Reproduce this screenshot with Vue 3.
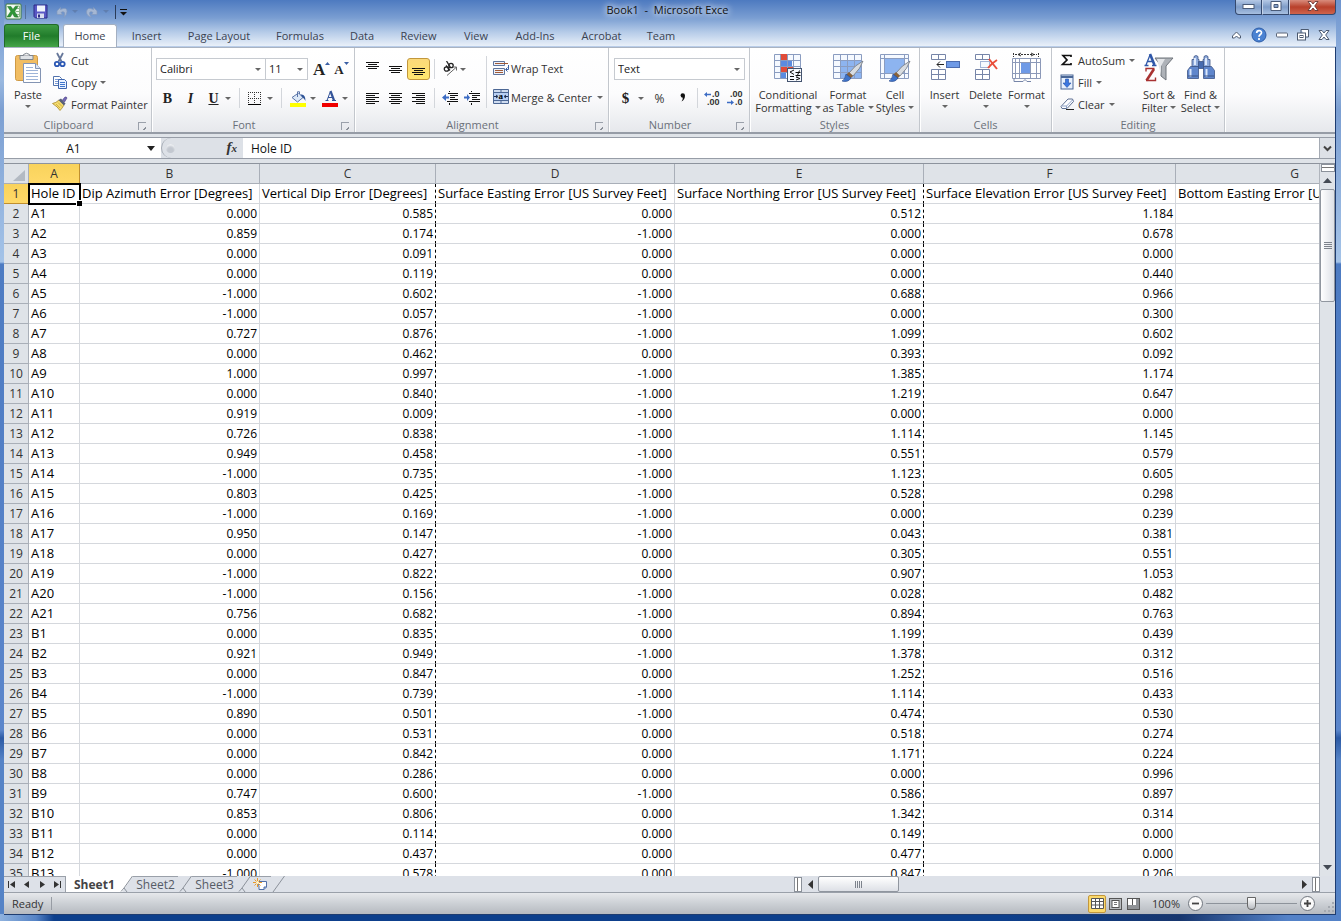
<script setup>
import { ref } from 'vue'

const tabs = [
  { name: 'Insert', w: 57 },
  { name: 'Page Layout', w: 88 },
  { name: 'Formulas', w: 74 },
  { name: 'Data', w: 50 },
  { name: 'Review', w: 63 },
  { name: 'View', w: 52 },
  { name: 'Add-Ins', w: 66 },
  { name: 'Acrobat', w: 67 },
  { name: 'Team', w: 52 }
]
const columns = ['A', 'B', 'C', 'D', 'E', 'F', 'G']
const headings = [
  'Hole ID',
  'Dip Azimuth Error [Degrees]',
  'Vertical Dip Error [Degrees]',
  'Surface Easting Error [US Survey Feet]',
  'Surface Northing Error [US Survey Feet]',
  'Surface Elevation Error [US Survey Feet]',
  'Bottom Easting Error [US Survey Feet]'
]
const rows = [
  ['A1', 0, 0.585, 0, 0.512, 1.184],
  ['A2', 0.859, 0.174, -1, 0, 0.678],
  ['A3', 0, 0.091, 0, 0, 0],
  ['A4', 0, 0.119, 0, 0, 0.44],
  ['A5', -1, 0.602, -1, 0.688, 0.966],
  ['A6', -1, 0.057, -1, 0, 0.3],
  ['A7', 0.727, 0.876, -1, 1.099, 0.602],
  ['A8', 0, 0.462, 0, 0.393, 0.092],
  ['A9', 1, 0.997, -1, 1.385, 1.174],
  ['A10', 0, 0.84, -1, 1.219, 0.647],
  ['A11', 0.919, 0.009, -1, 0, 0],
  ['A12', 0.726, 0.838, -1, 1.114, 1.145],
  ['A13', 0.949, 0.458, -1, 0.551, 0.579],
  ['A14', -1, 0.735, -1, 1.123, 0.605],
  ['A15', 0.803, 0.425, -1, 0.528, 0.298],
  ['A16', -1, 0.169, -1, 0, 0.239],
  ['A17', 0.95, 0.147, -1, 0.043, 0.381],
  ['A18', 0, 0.427, 0, 0.305, 0.551],
  ['A19', -1, 0.822, 0, 0.907, 1.053],
  ['A20', -1, 0.156, -1, 0.028, 0.482],
  ['A21', 0.756, 0.682, -1, 0.894, 0.763],
  ['B1', 0, 0.835, 0, 1.199, 0.439],
  ['B2', 0.921, 0.949, -1, 1.378, 0.312],
  ['B3', 0, 0.847, 0, 1.252, 0.516],
  ['B4', -1, 0.739, -1, 1.114, 0.433],
  ['B5', 0.89, 0.501, -1, 0.474, 0.53],
  ['B6', 0, 0.531, 0, 0.518, 0.274],
  ['B7', 0, 0.842, 0, 1.171, 0.224],
  ['B8', 0, 0.286, 0, 0, 0.996],
  ['B9', 0.747, 0.6, -1, 0.586, 0.897],
  ['B10', 0.853, 0.806, 0, 1.342, 0.314],
  ['B11', 0, 0.114, 0, 0.149, 0],
  ['B12', 0, 0.437, 0, 0.477, 0],
  ['B13', -1, 0.578, 0, 0.847, 0.206]
]
const zoom = ref(50)
const cellRef = ref('A1')
const formula = ref('Hole ID')
const alignRows = {
  left: [13, 9, 13, 9, 13, 9],
  center: [13, 9, 13, 9, 13, 9],
  right: [13, 9, 13, 9, 13, 9]
}
function barX(kind, w) {
  if (kind === 'left') return 0
  if (kind === 'right') return 13 - w
  return (13 - w) / 2
}
</script>

<template>
  <div class="window">
    <header class="titlebar">
      <div class="quick">
        <svg class="xl" width="17" height="17" viewBox="0 0 17 17" aria-hidden="true">
          <rect x="1" y="1" width="15" height="15" rx="1" fill="#f4fbf2" stroke="#3c7a3e" />
          <path d="M10.500 3h4v11h-4M10.500 5.500h4M10.500 8.500h4M10.500 11.500h4" stroke="#8fb78c" fill="none" />
          <path d="M2.500 3.500h3.500l2 3 2-3h3l-3.400 5 3.600 5.500H9.500l-2-3.400-2.200 3.400H2l3.800-5.700z" fill="#2f9637" stroke="#1f6e28" stroke-width=".5" />
        </svg>
        <i class="bar"></i>
        <button class="ic" aria-label="Save">
          <svg width="15" height="15" viewBox="0 0 15 15"><path d="M1 1h13v13H2.500L1 12.500z" fill="#5a58c4" stroke="#2d2b86" /><rect x="4" y="1.500" width="8" height="6" fill="#eef3fc" /><rect x="4" y="9.500" width="7" height="4.500" fill="#d9def0" /><rect x="5" y="10.500" width="2" height="3" fill="#2d2b86" /></svg>
        </button>
        <button class="ic undo" aria-label="Undo">
          <svg width="13" height="14" viewBox="0 0 13 14"><path d="M1 6L4.500 2.500v2Q11 1.500 11 6.500 11 9.500 8 12.500 9.500 8 8 7 6.500 6.200 5 7.500L6.500 9.500H1z" fill="#a5b7d3" stroke="#8299bd" stroke-width=".7" /></svg>
        </button>
        <i class="dd pale"></i>
        <button class="ic redo" aria-label="Redo">
          <svg width="13" height="14" viewBox="0 0 13 14"><path d="M12 6L8.500 2.500v2Q2 1.500 1.500 7q0 4 5 5.500Q3.500 8.500 5 7q1.500-.8 3 .5L6.500 9.500H12z" fill="#a5b7d3" stroke="#8299bd" stroke-width=".7" /></svg>
        </button>
        <i class="dd pale after"></i>
        <i class="bar dark"></i>
        <button class="ic" aria-label="Customize Quick Access Toolbar">
          <svg width="9" height="8" viewBox="0 0 9 8"><path d="M1 1.500h7" stroke="#111" /><path d="M1 4h7L4.500 7.500z" fill="#111" /></svg>
        </button>
      </div>
      <h1 class="title">Book1&nbsp; - &nbsp;Microsoft Exce</h1>
      <div class="wincontrols">
        <button aria-label="Minimize"><svg width="13" height="7" viewBox="0 0 13 7"><rect x="1" y="1.500" width="11" height="4" fill="#fff" stroke="#4a5b78" /></svg></button>
        <button aria-label="Maximize"><svg width="12" height="10" viewBox="0 0 12 10"><path fill-rule="evenodd" d="M1 .500h10v9H1zM4 3.500v3h4v-3z" fill="#fff" stroke="#4a5b78" /></svg></button>
        <button class="close" aria-label="Close"><svg width="12" height="10" viewBox="0 0 12 10"><path d="M1 .500h3l2 2.500 2-2.500h3L7.700 5 11 9.500H8L6 7 4 9.500H1L4.300 5z" fill="#fff" stroke="#5b2b2b" stroke-width=".8" /></svg></button>
      </div>
    </header>

    <nav class="tabs">
      <button class="file">File</button>
      <button class="tab active">Home</button>
      <button v-for="t in tabs" :key="t.name" class="tab" :style="{ width: t.w + 'px' }">{{ t.name }}</button>
      <div class="docctl">
        <button aria-label="Collapse ribbon"><svg width="11" height="10" viewBox="0 0 11 10"><path d="M1.500 6L5.500 2l4 4v2h-2L5.500 6l-2 2h-2z" fill="#fff" stroke="#4c5a70" /></svg></button>
        <button aria-label="Help"><svg width="16" height="16" viewBox="0 0 16 16"><circle cx="8" cy="8" r="7" fill="#4a82d2" stroke="#2d5da8" /><path d="M5.700 6c0-3 4.800-3 4.800-.3C10.500 7.500 8 7.500 8 9.700M8 11v2" stroke="#fff" stroke-width="1.700" fill="none" /></svg></button>
        <button aria-label="Minimize workbook"><svg width="12" height="6" viewBox="0 0 12 6"><rect x=".500" y="1" width="11" height="4" rx="1" fill="#fff" stroke="#5a6578" /></svg></button>
        <button aria-label="Restore workbook"><svg width="12" height="12" viewBox="0 0 12 12"><path d="M4 .500h7.500V8H9M4 .500V4" fill="#fff" stroke="#4c5a70" /><rect x=".500" y="4" width="8" height="7" fill="#fff" stroke="#4c5a70" /><rect x="3" y="6.500" width="3" height="2" fill="none" stroke="#4c5a70" /></svg></button>
        <button aria-label="Close workbook"><svg width="12" height="10" viewBox="0 0 12 10"><path d="M1 .500h3l2 2.500 2-2.500h3L7.700 5 11 9.500H8L6 7 4 9.500H1L4.300 5z" fill="#fff" stroke="#4c5a70" /></svg></button>
      </div>
    </nav>

    <div class="frame">
      <div class="ribbon">
        <section class="group clipboard">
          <div class="body">
            <button class="big paste">
              <svg width="28" height="32" viewBox="0 0 28 32"><rect x="1.500" y="3.500" width="22" height="25" rx="2" fill="#f1bd62" stroke="#cf9a45" /><path d="M6 3.500h13v4H6z" fill="#dfe2e6" stroke="#7e858e" /><path d="M9.500 3.500V2.500Q12.500 0 15.500 2.500v1" fill="#f4f4f4" stroke="#7e858e" /><path d="M9.500 11.500h12l5 5v14h-17z" fill="#fff" stroke="#8394b3" /><path d="M21.500 11.500v5h5" fill="#dce5f3" stroke="#8394b3" /><path d="M12 15.500h7M12 18.500h12M12 21.500h12M12 24.500h12M12 27.500h12" stroke="#9db4d8" /></svg>
              <span>Paste</span><i class="dd"></i>
            </button>
            <div class="stack">
              <button class="sm"><svg width="16" height="16" viewBox="0 0 16 16"><path d="M5 1l4.500 8.500M11 1L6.500 9.500" stroke="#66779a" stroke-width="1.800" /><circle cx="5" cy="12" r="2.200" fill="none" stroke="#2c58b4" stroke-width="1.800" /><circle cx="10.500" cy="12" r="2.200" fill="none" stroke="#2c58b4" stroke-width="1.800" /></svg>Cut</button>
              <button class="sm"><svg width="16" height="16" viewBox="0 0 16 16"><path d="M1.500 2.500h6l2 2v7h-8z" fill="#fff" stroke="#5273ad" /><path d="M3 5.500h4M3 7.500h4M3 9.500h4" stroke="#7c9bd4" /><path d="M6.500 5.500h6l2 2v7h-8z" fill="#eaf2ff" stroke="#3f66ae" /><path d="M8 8.500h5M8 10.500h5M8 12.500h5" stroke="#3f75cc" /></svg>Copy<i class="dd"></i></button>
              <button class="sm"><svg width="16" height="16" viewBox="0 0 16 16"><path d="M.500 7.500Q4 7 7 4l5 5q-2 3.500-4 5.500-2-3.500-7.500-7z" fill="#f5dc6e" stroke="#a98a2c" stroke-width=".8" /><path d="M6.500 4L9 2.500l4.500 5L12 9.500z" fill="#59617a" /><path d="M10.500 4L13 1q1.500-.5 2 1l-2.500 4z" fill="#7468b8" stroke="#443b7c" stroke-width=".6" /><path d="M4 8l4 4M6 6.500l4 4" stroke="#c39e34" stroke-width=".7" /></svg>Format Painter</button>
            </div>
          </div>
          <footer class="wl">Clipboard<i class="launch"></i></footer>
        </section>

        <section class="group font">
          <div class="body col">
            <div class="line">
              <span class="combo"><select class="family" aria-label="Font"><option>Calibri</option></select><i class="dd"></i></span>
              <span class="combo"><select class="size" aria-label="Font size"><option>11</option></select><i class="dd"></i></span>
              <button class="ic grow" aria-label="Grow font"><b class="serif g1">A</b><svg width="5" height="14" viewBox="0 0 5 14"><path d="M0 3L2.500 0 5 3z" fill="#3a5fa5" /></svg></button>
              <button class="ic shrink" aria-label="Shrink font"><b class="serif g2">A</b><svg width="5" height="14" viewBox="0 0 5 14"><path d="M0 0L2.500 3 5 0z" fill="#3a5fa5" /></svg></button>
            </div>
            <div class="line">
              <button class="ic let" aria-label="Bold"><b class="serif">B</b></button>
              <button class="ic let" aria-label="Italic"><em class="serif">I</em></button>
              <button class="ic let" aria-label="Underline"><u class="serif">U</u></button>
              <i class="dd flush"></i><i class="sep"></i>
              <button class="ic" aria-label="Borders"><svg width="13" height="13" viewBox="0 0 13 13"><path d="M0 .500h13M0 6.500h13M.500 0v12M6.500 0v12M12.500 0v12" stroke="#333" stroke-dasharray="1 1" fill="none" shape-rendering="crispEdges" /><path d="M0 12.500h13" stroke="#000" /></svg></button>
              <i class="dd wide"></i><i class="sep"></i>
              <button class="ic" aria-label="Fill color"><svg width="16" height="18" viewBox="0 0 16 18"><path d="M2 8.500L8.500 4l4.500 4.500-5.500 4.500z" fill="#dce8f7" stroke="#5a74a8" /><path d="M7.500 8V3Q8.500 1 9.500 3v2" fill="none" stroke="#5a74a8" /><path d="M10.500 5.500q5-1 5 6.500-1.500-3-3-3.500z" fill="#2d5296" /><rect y="14" width="16" height="4" fill="#ff0" /></svg></button>
              <i class="dd"></i>
              <button class="ic fc" aria-label="Font color"><svg width="16" height="18" viewBox="0 0 16 18"><path d="M8.500 2l3.500 9.500" stroke="#34549a" stroke-width="2.200" /><path d="M8.200 3L5 11.500M6 8.500h5M3.500 11.500h3M10 11.500h4" stroke="#34549a" fill="none" /><rect y="14" width="16" height="4" fill="#f00000" /></svg></button>
              <i class="dd"></i>
            </div>
          </div>
          <footer class="wl">Font<i class="launch"></i></footer>
        </section>

        <section class="group alignment">
          <div class="body">
            <div class="aligns">
              <div class="line">
                <button class="ic al" aria-label="Top align"><svg width="13" height="14" viewBox="0 0 13 14"><path d="M0 .500h13M2 2.500h9M0 4.500h13M2 6.500h9" stroke="#111" /></svg></button>
                <button class="ic al" aria-label="Middle align"><svg width="13" height="14" viewBox="0 0 13 14"><path d="M0 4.500h13M2 6.500h9M0 8.500h13M2 10.500h9" stroke="#111" /></svg></button>
                <button class="ic al on" aria-label="Bottom align"><svg width="13" height="14" viewBox="0 0 13 14"><path d="M0 6.500h13M2 8.500h9M0 10.500h13M2 12.500h9" stroke="#111" /></svg></button>
                <i class="sep"></i>
                <button class="ic" aria-label="Orientation"><svg width="16" height="16" viewBox="0 0 16 16"><g fill="none" stroke="#222" stroke-width="1.300"><circle cx="4.500" cy="8" r="2.200" /><path d="M4 4.500l4 5" /><circle cx="9" cy="4.500" r="2.200" /><path d="M4.500 0l4 6.500" /></g><path d="M5 14.500l9-8M11 6h3.500v3.500" stroke="#666" fill="none" /></svg></button>
                <i class="dd"></i>
              </div>
              <div class="line">
                <button v-for="(ws, kind) in alignRows" :key="kind" class="ic al" :aria-label="'Align ' + kind">
                  <svg width="13" height="13" viewBox="0 0 13 13"><rect v-for="(w, i) in ws" :key="i" :x="barX(kind, w)" :y="1 + i * 2" :width="w" height="1" fill="#111" /></svg>
                </button>
                <i class="sep"></i>
                <button class="ic" aria-label="Decrease indent"><svg width="16" height="14" viewBox="0 0 16 14"><path d="M6 2.500h10M8 4.500h8M8 6.500h5M8 8.500h8M5 10.500h11M7.500 0v1M7.500 12v2" stroke="#111" /><path d="M0 6.500L4 3v2.500h3v2H4V10z" fill="#3c6cc4" /></svg></button>
                <button class="ic" aria-label="Increase indent"><svg width="16" height="14" viewBox="0 0 16 14"><path d="M5 2.500h11M8 4.500h8M8 6.500h5M8 8.500h8M5 10.500h11M7.500 0v1M7.500 12v2" stroke="#111" /><path d="M6 6.500L3 3v2.500H0v2h3V10z" fill="#3c6cc4" /></svg></button>
              </div>
            </div>
            <i class="vsep"></i>
            <div class="wraps">
              <button class="sm"><svg width="17" height="16" viewBox="0 0 17 16"><path d="M.500 1.500h11v4H.500zM.500 8.500h11v6H.500z" fill="#eef2fa" stroke="#5f759d" /><path d="M2 3.500h13M2 10.500h8M2 12.500h8" stroke="#a05a38" /><path d="M15.500 5v4.500H13M14.500 7.500L12.500 9.500l2 2" stroke="#3a5fa5" fill="none" /></svg>Wrap Text</button>
              <button class="sm"><svg width="17" height="16" viewBox="0 0 17 16"><path d="M.500.500h15v14H.500zM.500 3.500h15M.500 11.500h15M8 .500v3M8 11.500v3" fill="#cfdcf0" stroke="#4c6794" /><rect x="1" y="4" width="14" height="7" fill="#b9d0f4" /><path d="M1 7.500h3M12 7.500h3M3 6l2 1.500L3 9M13 6l-2 1.500L13 9" stroke="#1e2e50" fill="none" /><text x="5.500" y="10" font-size="9" font-weight="bold" font-family="Liberation Serif">a</text></svg>Merge &amp; Center<i class="dd"></i></button>
            </div>
          </div>
          <footer class="wl">Alignment<i class="launch"></i></footer>
        </section>

        <section class="group number">
          <div class="body col">
            <div class="line"><span class="combo"><select class="format" aria-label="Number format"><option>Text</option></select><i class="dd"></i></span></div>
            <div class="line">
              <button class="ic n" aria-label="Accounting format"><b class="serif">$</b></button><i class="dd"></i>
              <button class="ic n" aria-label="Percent style"><span class="pct">%</span></button>
              <button class="ic n" aria-label="Comma style"><svg width="6" height="10" viewBox="0 0 6 10"><path d="M.500 2.500a2 2 0 1 1 4.500 0Q5 6.500 1.500 8.500 3 6.500 2.800 4.800 1 4.800.500 2.500z" fill="#111" /></svg></button>
              <i class="sep"></i>
              <button class="ic dec" aria-label="Increase decimal"><svg width="17" height="18" viewBox="0 -2 17 18"><text x="8" y="6" class="tiny">.0</text><text x="3" y="14" class="tiny">.00</text><path d="M0 3.500L3 1v1.800h4v1.500H3V6z" fill="#3c6cc4" /></svg></button>
              <button class="ic dec" aria-label="Decrease decimal"><svg width="17" height="18" viewBox="0 -2 17 18"><text x="3" y="6" class="tiny">.00</text><text x="8" y="14" class="tiny">.0</text><path d="M7 11.500L4 9v1.800H0v1.500h4V14z" fill="#3c6cc4" /></svg></button>
            </div>
          </div>
          <footer class="wl">Number<i class="launch"></i></footer>
        </section>

        <section class="group styles">
          <div class="body">
            <button class="big w68">
              <svg width="30" height="32" viewBox="0 0 30 32"><path d="M1.500 2.500h26v24h-26z" fill="#f5f9ff" stroke="#8a9cc0" /><rect x="7" y="2" width="7" height="6" fill="#e04b38" /><rect x="7" y="8" width="12" height="6" fill="#5b8be0" /><rect x="7" y="14" width="13" height="6" fill="#e04b38" /><rect x="7" y="20" width="6" height="6" fill="#5b8be0" /><path d="M1.500 8.500h26M1.500 14.500h26M1.500 20.500h26M7.500 2.500v24M14.500 2.500v24M20.500 2.500v24" stroke="#8a9cc0" fill="none" /><rect x="14.500" y="16.500" width="14" height="13" fill="#f7faff" stroke="#44546f" /><path d="M21 18l-4 2 4 2.500M17 24.500h4M17 27.500h4M22.500 20.500h5M22.500 23.500h5M26.500 18.500l-2.500 6M23 25l4 1.500-4 1.500" stroke="#111" fill="none" /></svg>
              <span>Conditional</span><span>Formatting<i class="dd"></i></span>
            </button>
            <button class="big w52">
              <svg width="32" height="32" viewBox="0 0 32 32"><path d="M1.500 2.500h28v24h-28z" fill="#f5f9ff" stroke="#8a9cc0" /><path d="M8 8h21v18H8z" fill="#8db4f0" /><path d="M1.500 8.500h28M1.500 14.500h28M1.500 20.500h28M8.500 2.500v24M15.500 2.500v24M22.500 2.500v24" stroke="#8a9cc0" fill="none" /><path d="M31 9q-8 4-14 12l4 3q8-8 10-15z" fill="#d8dce1" stroke="#6d747e" stroke-width=".8" /><path d="M17 20l4 4-3 3-4-4z" fill="#8a6238" /><path d="M14 22q-1 6-4 7 6 2 9-3z" fill="#3f73c8" stroke="#26488c" stroke-width=".6" /></svg>
              <span>Format</span><span>as Table<i class="dd"></i></span>
            </button>
            <button class="big w42">
              <svg width="32" height="32" viewBox="0 0 32 32"><path d="M1.500 2.500h28v24h-28z" fill="#f5f9ff" stroke="#8a9cc0" /><path d="M6 7h19v14H6z" fill="#8db4f0" /><path d="M1.500 6.500h28M1.500 21.500h28M5.500 2.500v24M25.500 2.500v24" stroke="#8a9cc0" fill="none" /><path d="M31 9q-8 4-14 12l4 3q8-8 10-15z" fill="#d8dce1" stroke="#6d747e" stroke-width=".8" /><path d="M17 20l4 4-3 3-4-4z" fill="#8a6238" /><path d="M14 22q-1 6-4 7 6 2 9-3z" fill="#3f73c8" stroke="#26488c" stroke-width=".6" /></svg>
              <span>Cell</span><span>Styles<i class="dd"></i></span>
            </button>
          </div>
          <footer>Styles</footer>
        </section>

        <section class="group cells">
          <div class="body">
            <button class="big w41">
              <svg width="32" height="32" viewBox="0 0 32 32"><path d="M2.500 2.500h14v5h-14zM9.500 2.500v5M2.500 17.500h14v10h-14zM9.500 17.500v10M2.500 22.500h14" fill="#fff" stroke="#7685a8" /><rect x="17.500" y="9.500" width="13" height="6" fill="#6f9ae6" stroke="#4c6cae" /><path d="M8 12.500h7M11 9.500l-3 3 3 3" stroke="#222" fill="none" /></svg>
              <span>Insert</span><i class="dd"></i>
            </button>
            <button class="big w41">
              <svg width="32" height="32" viewBox="0 0 32 32"><path d="M5.500 2.500h14v5h-14zM12.500 2.500v5M5.500 17.500h14v10h-14zM12.500 17.500v10M5.500 22.500h14" fill="#fff" stroke="#7685a8" /><path d="M10.500 9.500h9v6h-9z" fill="#f5f9ff" stroke="#4c6cae" stroke-dasharray="1 1" /><path d="M19 7l8 10M27 8q-5 3-9 8" stroke="#ea4f3b" stroke-width="2" fill="none" /></svg>
              <span>Delete</span><i class="dd"></i>
            </button>
            <button class="big w41">
              <svg width="32" height="32" viewBox="0 0 32 32"><path d="M2.500 1v4M27.500 1v4M4 2.500h22" stroke="#333" stroke-dasharray="2 1" /><path d="M10 1L7 2.500 10 4M20 1l3 1.500L20 4" fill="none" stroke="#333" /><path d="M1.500 6.500h28v20h-28z" fill="#fff" stroke="#8c99b8" /><rect x="10" y="11" width="9" height="11" fill="#6f9ae6" /><path d="M1.500 10.500h28M1.500 21.500h28M8.500 6.500v20M19.500 6.500v20M25.500 6.500v20M4.500 6.500v20" stroke="#8c99b8" /><path d="M3 26.500v3h9l2-2 2 2h4" fill="none" stroke="#7685a8" /></svg>
              <span>Format</span><i class="dd"></i>
            </button>
          </div>
          <footer>Cells</footer>
        </section>

        <section class="group editing">
          <div class="body">
            <div class="stack">
              <button class="sm"><svg width="14" height="16" viewBox="0 0 14 16"><path d="M11 5V3.500H3L7 8l-4.500 4.500H11V11" fill="none" stroke="#111" stroke-width="1.700" /></svg>AutoSum<i class="dd"></i></button>
              <button class="sm"><svg width="14" height="16" viewBox="0 0 14 16"><rect x="1" y="1" width="12" height="14" fill="#e7f0fd" stroke="#4a6796" /><path d="M1 3h12" stroke="#4a6796" stroke-width="2" /><path d="M5.500 5h3v4h2.500L7 13.500 3 9h2.500z" fill="#3c77e0" stroke="#2151a8" stroke-width=".6" /></svg>Fill<i class="dd"></i></button>
              <button class="sm"><svg width="14" height="16" viewBox="0 0 14 16"><path d="M1 10.500L8 3h4.500l1 2.500L7 12.500H2z" fill="#fdfdff" stroke="#5d6f92" /><path d="M2 10h4.500L12.500 4M6.500 10v2.500" stroke="#8da3c8" fill="none" /><path d="M6 13.500h8" stroke="#222" /></svg>Clear<i class="dd"></i></button>
            </div>
            <button class="big w42">
              <svg width="32" height="32" viewBox="0 0 32 32"><path d="M7 2l4.500 11" stroke="#2f57a8" stroke-width="2.600" /><path d="M7 3L3 13M4.500 9.500h5.500M1.500 13.500h4M9 13.500h4.500" stroke="#2f57a8" stroke-width="1.300" fill="none" /><path d="M11 17L3.500 28.500" stroke="#a83232" stroke-width="2.600" /><path d="M3 19.500v-3h8.500M3 28.500h9.500v-3" stroke="#a83232" stroke-width="1.400" fill="none" /><path d="M12 6h18l-7 8v14l-5-4V14z" fill="#aeb2b8" stroke="#6f747b" /><path d="M14 7h8l-4 7v9z" fill="#e3e5e8" /></svg>
              <span>Sort &amp;</span><span>Filter<i class="dd"></i></span>
            </button>
            <button class="big w41">
              <svg width="30" height="32" viewBox="0 0 30 32"><g stroke="#3c5486" stroke-width=".8" fill="#8fabdc"><path d="M8 4.500q2-2 4 0v3h1v7H6v-7h2zM18 4.500q2-2 4 0v3h2v7h-7v-7h1z" /><path d="M4.500 14.500h8v12h-11v-8zM17.500 14.500h8l3 4v8h-11z" fill="#5f86cc" /><path d="M12.500 9.500h5v7h-5z" fill="#466bb0" /></g><path d="M4.500 17v8M20.500 17v8M9 6v7M20 6v7" stroke="#dce8fb" stroke-width="2" /><path d="M2 24h10M18 24h10" stroke="#3c5486" /></svg>
              <span>Find &amp;</span><span>Select<i class="dd"></i></span>
            </button>
          </div>
          <footer>Editing</footer>
        </section>
      </div>

      <div class="fbar">
        <div class="namebox"><input v-model="cellRef" aria-label="Name box" /><svg width="8" height="5" viewBox="0 0 8 5"><path d="M0 0h8L4 5z" fill="#222" /></svg></div>
        <div class="fxarea"><i class="knob"></i><button class="ic" aria-label="Insert function"><em class="serif fx">f<small>x</small></em></button></div>
        <input v-model="formula" class="formula" aria-label="Formula bar" />
        <button class="expand" aria-label="Expand formula bar"><svg width="9" height="7" viewBox="0 0 9 7"><path d="M1 1.500l3.500 3.500L8 1.500" stroke="#444" stroke-width="2" fill="none" /></svg></button>
      </div>

      <main class="work">
        <div class="sheet">
          <table>
            <colgroup><col class="c0" /><col v-for="c in columns" :key="c" :class="'c' + c" /></colgroup>
            <thead>
              <tr><th class="corner"><svg width="12" height="11" viewBox="0 0 12 11" aria-hidden="true"><path d="M12 0v11H0z" fill="#b3bac3" /></svg></th><th v-for="c in columns" :key="c" :class="{ sel: c === 'A' }">{{ c }}</th></tr>
            </thead>
            <tbody>
              <tr>
                <th class="sel">1</th>
                <td v-for="(h, i) in headings" :key="h" :class="{ pb: i === 2 || i === 4, active: i === 0 }">{{ h }}</td>
              </tr>
              <tr v-for="(r, n) in rows" :key="r[0]">
                <th>{{ n + 2 }}</th>
                <td>{{ r[0] }}</td>
                <td v-for="i in 5" :key="i" class="num" :class="{ pb: i === 2 || i === 4 }">{{ r[i].toFixed(3) }}</td>
                <td></td>
              </tr>
            </tbody>
          </table>
        </div>
        <div class="vscroll">
          <i class="split"></i>
          <button aria-label="Scroll up"><svg width="9" height="5" viewBox="0 0 9 5"><path d="M0 5h9L4.500 0z" fill="#444a54" /></svg></button>
          <div class="vthumb"><i></i><i></i><i></i><i></i></div>
          <div class="vspace"></div>
          <button aria-label="Scroll down"><svg width="9" height="5" viewBox="0 0 9 5"><path d="M0 0h9L4.500 5z" fill="#444a54" /></svg></button>
        </div>
      </main>

      <div class="sheetbar">
        <div class="nav">
          <button aria-label="First sheet"><svg width="7" height="7" viewBox="0 0 7 7"><path d="M7 0v7L2 3.500z" fill="#333" /><path d="M.500 0v7" stroke="#333" /></svg></button>
          <button aria-label="Previous sheet"><svg width="5" height="7" viewBox="0 0 5 7"><path d="M5 0v7L0 3.500z" fill="#333" /></svg></button>
          <button aria-label="Next sheet"><svg width="5" height="7" viewBox="0 0 5 7"><path d="M0 0v7l5-3.500z" fill="#333" /></svg></button>
          <button aria-label="Last sheet"><svg width="7" height="7" viewBox="0 0 7 7"><path d="M0 0v7l5-3.500z" fill="#333" /><path d="M6.500 0v7" stroke="#333" /></svg></button>
        </div>
        <button class="stab first">Sheet1</button>
        <svg class="edge" width="14" height="16" viewBox="0 0 14 16" aria-hidden="true"><path d="M0 0h14L3 16H0z" fill="#fff" /><path d="M13.500 0L5 12l-3 3.500M5 12l3 4" stroke="#8b919a" fill="none" /></svg>
        <button class="stab">Sheet2</button>
        <svg class="edge" width="14" height="16" viewBox="0 0 14 16" aria-hidden="true"><path d="M13.500 0L5 12l-3 3.500M5 12l3 4" stroke="#8b919a" fill="none" /></svg>
        <button class="stab">Sheet3</button>
        <svg class="edge" width="14" height="16" viewBox="0 0 14 16" aria-hidden="true"><path d="M13.500 0L5 12l-3 3.500M5 12l3 4" stroke="#8b919a" fill="none" /></svg>
        <button class="stab new" aria-label="Insert worksheet"><svg width="16" height="13" viewBox="0 0 16 13"><path d="M4 3.500h9.500V9L11 11.500H6V8z" fill="#fff" stroke="#5270a8" /><path d="M13.500 9H11v2.500" fill="#9db4dd" stroke="#5270a8" /><path d="M4.500 0v9M0 4.500h9M1.500 1.500l6 6M7.500 1.500l-6 6" stroke="#e79a2c" /><circle cx="4.500" cy="4.500" r="1.500" fill="#fff6cf" /></svg></button>
        <svg class="edge" width="14" height="16" viewBox="0 0 14 16" aria-hidden="true"><path d="M13.500 0L2 16" stroke="#8b919a" fill="none" /></svg>
        <div class="hscroll">
          <i class="hsplit"></i>
          <button aria-label="Scroll left"><svg width="5" height="9" viewBox="0 0 5 9"><path d="M5 0v9L0 4.500z" fill="#333" /></svg></button>
          <div class="hthumb"><i></i><i></i><i></i><i></i></div>
          <div class="hspace"></div>
          <button aria-label="Scroll right"><svg width="5" height="9" viewBox="0 0 5 9"><path d="M0 0v9l5-4.500z" fill="#333" /></svg></button>
          <i class="hsplit"></i>
        </div>
      </div>

      <footer class="status">
        <span class="ready">Ready</span>
        <span class="spacer"></span>
        <button class="view on" aria-label="Normal view"><svg width="13" height="11" viewBox="0 0 13 11"><path d="M.500.500h12v10H.500zM.500 3.500h12M.500 7h12M4.500.500v10M8.500.500v10" fill="#fff" stroke="#555" /></svg></button>
        <button class="view" aria-label="Page layout view"><svg width="13" height="12" viewBox="0 0 13 12"><rect x=".500" y=".500" width="12" height="11" fill="#b9bcc0" stroke="#555" /><rect x="3" y="2.500" width="7" height="7" fill="#fff" stroke="#555" /><path d="M5 4.500h3M5 6.500h3" stroke="#777" /></svg></button>
        <button class="view" aria-label="Page break preview"><svg width="13" height="12" viewBox="0 0 13 12"><rect x=".500" y=".500" width="12" height="11" fill="#8f9296" stroke="#555" /><path d="M1 1h4v6H1zM6 1h3v6H6z" fill="#fff" /><path d="M5.500 1v6" stroke="#555" /></svg></button>
        <span class="pc">100%</span>
        <button class="round" aria-label="Zoom out"><svg width="15" height="15" viewBox="0 0 15 15"><circle cx="7.500" cy="7.500" r="7" fill="#fafafa" stroke="#6f757d" /><path d="M4 7.500h7" stroke="#444" stroke-width="1.800" /></svg></button>
        <input v-model="zoom" type="range" class="zoom" aria-label="Zoom" />
        <button class="round" aria-label="Zoom in"><svg width="15" height="15" viewBox="0 0 15 15"><circle cx="7.500" cy="7.500" r="7" fill="#fafafa" stroke="#6f757d" /><path d="M4 7.500h7M7.500 4v7" stroke="#444" stroke-width="1.800" /></svg></button>
        <svg class="grip" width="10" height="12" viewBox="0 0 10 12" aria-hidden="true"><path d="M8 1h2v2H8zM4 5h2v2H4zM8 5h2v2H8zM0 9h2v2H0zM4 9h2v2H4zM8 9h2v2H8z" fill="#a4a9b0" /></svg>
      </footer>
    </div>
  </div>
</template>

<style>
body { margin: 0; overflow: hidden; }
</style>

<style scoped>
* { box-sizing: border-box; }
button, input, select { font: inherit; color: inherit; border: 0; background: none; padding: 0; margin: 0; outline: 0; }
svg { display: block; flex: none; }
.window {
  height: 100vh; display: flex; flex-direction: column; padding: 0 5px 6px 4px; overflow: hidden;
  font: 11px/13px "Open Sans", "Noto Sans", sans-serif; color: #333;
  background:
    linear-gradient(#4d7ac0, #7a9ed2 18px, #b5cbe8 32px, #e9f0f9 46px, transparent 47px) 4px 0 / calc(100% - 9px) 47px no-repeat,
    linear-gradient(90deg, #8fb2de, #5583c6 40%, #0d3f8c 60%) 0 100% / 90px 7px no-repeat,
    linear-gradient(90deg, #0d3f8c 0, #0d3f8c 75%, #17366e 88%, #5482c8 96%) 100% 100% / 100% 7px no-repeat,
    linear-gradient(#6e94cf, #9ab9e0 80px, #7c9fd2 110px, #a4c3e8 262px, #4d7bc2 264px, #5b86cb 730px, #2c5aa5 738px, #5583c6 760px);
}
.titlebar { display: flex; height: 24px; justify-content: space-between; align-items: flex-start; flex: none; }
.quick { display: flex; align-items: center; height: 22px; width: 240px; gap: 3px; padding: 1px 0 0 1px; }
.bar { width: 1px; height: 14px; background: #55719c; margin-right: 4px; }
.bar.dark { background: #2a3b58; margin: 0 0 0 3px; }
.ic { display: flex; align-items: center; justify-content: center; }
.undo { margin-left: 5px; }
.redo { margin-left: 4px; }
.dd { display: inline-block; flex: none; width: 0; height: 0; border: 3px solid transparent; border-top-color: #666; border-bottom-width: 0; }
.dd.pale { border-top-color: #5f7eaf; }
.dd.after { margin-left: 2px; }
.title { margin: 0; font: 11px/20px "Open Sans", sans-serif; color: #111; white-space: nowrap; text-shadow: 0 0 6px #fff, 0 0 8px #fff; }
.wincontrols { display: flex; width: 245px; justify-content: flex-end; }
.wincontrols button { width: 27px; height: 15px; display: flex; justify-content: center; align-items: center; padding-bottom: 2px; border: 1px solid #35496e; border-top: 0; border-left-color: #c5d4ea; background: linear-gradient(#b5c9e6, #7e9cc8 50%, #a7bfe0); }
.wincontrols button:first-child { border-bottom-left-radius: 4px; border-left-color: #35496e; }
.wincontrols .close { width: 47px; border-bottom-right-radius: 4px; background: linear-gradient(#d98c7c, #b8402b 50%, #d0644c); }
.tabs { display: flex; height: 24px; flex: none; align-items: flex-start; font-size: 11px; color: #3b4352; }
.file { width: 55px; height: 23px; padding-bottom: 2px; border: 1px solid #216b28; border-bottom: 0; border-radius: 3px 3px 0 0; color: #fff; background: linear-gradient(#3f9c45, #217c2b 50%, #45a548); }
.tab { height: 24px; text-align: center; white-space: nowrap; padding-bottom: 2px; }
.tab.active { width: 54px; margin: 0 1px 0 4px; background: #fff; border: 1px solid #a4b0c2; border-bottom: 0; border-radius: 3px 3px 0 0; }
.docctl { margin: 0 6px 0 auto; display: flex; align-items: center; gap: 9px; height: 22px; }
.frame { flex: 1; min-height: 0; display: flex; flex-direction: column; border: solid #1e3c70; border-width: 0 1px 1px 0; background: #dfe3e8; margin-top: -1px; }
.ribbon { display: flex; height: 87px; flex: none; border-top: 1px solid #a9b3c2; border-bottom: 2px solid #969ca6; background: linear-gradient(#fff, #fcfcfd 55%, #e6e8ec); }
.group { display: flex; flex-direction: column; border-right: 1px solid #c3c7cd; box-shadow: 1px 0 #fff; flex: none; }
.group .body { flex: 1; display: flex; min-height: 0; }
.group .body.col { flex-direction: column; }
.group footer { height: 15px; flex: none; display: flex; justify-content: center; position: relative; line-height: 15px; color: #6a7079; }
.group footer.wl { padding-right: 18px; }
.launch { position: absolute; right: 5px; top: 5px; width: 8px; height: 8px; border: solid #9aa0aa; border-width: 1px 0 0 1px; background: linear-gradient(135deg, transparent 45%, #8a9099 45%, #8a9099 60%, transparent 60%) 2px 2px no-repeat; border-bottom-right-radius: 1px; }
.clipboard { width: 148px; } .font { width: 203px; } .alignment { width: 254px; } .number { width: 141px; }
.styles { width: 170px; } .cells { width: 132px; } .editing { width: 173px; }
.big { display: flex; flex-direction: column; align-items: center; padding-top: 4px; white-space: nowrap; }
.big svg { margin-bottom: 4px; }
.big span { display: flex; align-items: center; gap: 3px; }
.big > .dd { margin-top: 4px; }
.paste { width: 48px; }
.w68 { width: 68px; } .w52 { width: 52px; } .w42 { width: 42px; } .w41 { width: 41px; }
.styles .body { padding-left: 4px; }
.cells .body { padding-left: 4px; }
.stack { display: flex; flex-direction: column; padding-top: 1px; }
.sm { display: flex; align-items: center; gap: 3px; height: 22px; white-space: nowrap; }
.editing .stack { width: 78px; margin-left: 8px; }
.editing .sm { gap: 4px; }
.line { display: flex; align-items: center; height: 24px; }
.line + .line { margin-top: 5px; }
.font .body, .number .body { padding: 9px 0 0 4px; }
.number .body { padding-left: 5px; }
.combo { display: flex; position: relative; }
.combo .dd { position: absolute; right: 5px; top: 10px; pointer-events: none; }
.combo select { appearance: none; height: 22px; border: 1px solid #c6cad0; background: #fff; padding: 0 0 2px 3px; color: #222; }
.family { width: 110px; } .size { width: 42px; } .format { width: 131px; }
.combo + .combo select { border-left: 0; }
.serif { font-family: "Liberation Serif", serif; color: #222; }
.g1 { font-size: 17px; } .g2 { font-size: 13px; }
.grow { margin-left: 5px; } .shrink { margin-left: 4px; }
.let { width: 23px; font-size: 14px; }
.let em, .let u { font-weight: bold; }
.sep { width: 1px; height: 20px; background: #d3d6db; margin: 0 8px; }
.font .ic + .dd { margin-left: 4px; }
.font .ic + .dd.flush { margin-left: 0; }
.font .ic + .dd.wide { margin-left: 6px; }
.fc { margin-left: 6px; }
.alignment .body { padding-left: 6px; }
.aligns { padding-top: 9px; width: 125px; }
.al { width: 23px; height: 22px; }
.al.on { border: 1px solid #c2973c; border-radius: 3px; background: linear-gradient(#fbd97a, #ffe66e); }
.aligns .sep { margin: 0 7px 0 4px; }
.aligns .ic + .dd { margin-left: 2px; }
.aligns .line:last-child .ic:last-child { margin-left: 6px; }
.vsep { width: 1px; height: 52px; background: #d3d6db; margin: 8px 6px 0 0; }
.wraps { padding-top: 9px; display: flex; flex-direction: column; gap: 7px; }
.wraps .sm { gap: 1px; }
.wraps .dd { margin-left: 4px; }
.n { width: 23px; font-size: 15px; }
.pct { font-size: 12px; }
.dec + .dec { margin-left: 6px; }
.number .sep { margin: 0 6px 0 3px; }
.number .line .dd { margin: 0 4px 0 1px; }
.number .combo .dd { margin: 0; }
.tiny { font: bold 9px "Liberation Sans", sans-serif; fill: #333; }
.dec svg { overflow: visible; }
.fbar { display: flex; height: 22px; margin: 3px 0 4px; flex: none; background: #dde1e7; border: solid #979da7; border-width: 1px 0; color: #111; font-size: 12px; }
.namebox { width: 157px; display: flex; align-items: center; background: #fff; }
.namebox input { width: 139px; text-align: center; margin-right: 4px; min-width: 0; }
.fxarea { width: 82px; display: flex; justify-content: space-between; align-items: center; padding-right: 6px; border-left: 1px solid #a5abb4; border-radius: 10px 0 0 10px; }
.knob { width: 9px; height: 9px; border-radius: 50%; background: #c3c8d0; margin-left: 4px; box-shadow: inset 0 2px 2px #eef0f3; }
.fx { font-size: 15px; font-weight: bold; color: #333; } .fx small { font-size: 11px; }
.formula { flex: 1; background: #fff; padding-left: 8px; min-width: 0; }
.expand { width: 16px; border-left: 1px solid #a5abb4; display: flex; align-items: center; justify-content: center; }
.work { flex: 1; min-height: 0; display: flex; border-top: 1px solid #8d939d; }
.sheet { flex: 1; min-width: 0; overflow: hidden; background: #fff; }
table { border-collapse: separate; border-spacing: 0; table-layout: fixed; width: 1410px; font: 12px/19px "Open Sans", "Noto Sans", sans-serif; color: #000; }
.c0 { width: 25px; } .cA { width: 51px; } .cB { width: 180px; } .cC { width: 176px; } .cD { width: 239px; } .cE { width: 249px; } .cF { width: 252px; } .cG { width: 238px; }
th, td { height: 20px; padding: 0; white-space: nowrap; border: solid #d5d8dd; border-width: 0 1px 1px 0; }
th { font-weight: normal; background: #dfe3e8; border-color: #a9afb8; color: #333; text-align: center; }
th.sel { background: linear-gradient(#f9d35c, #ffd968); border-color: #c08f2f; }
.corner svg { margin: 3px 0 0 9px; }
td { padding-left: 2px; font-size: 13px; }
td.num { text-align: right; padding-right: 2px; font-size: 12px; }
td.pb { border-right: 1px dashed #000; }
td.active { outline: 2px solid #000; outline-offset: -1px; position: relative; }
td.active::after { content: ""; position: absolute; right: -3px; bottom: -3px; width: 5px; height: 5px; background: #000; border: solid #fff; border-width: 1px 0 0 1px; }
.vscroll { width: 16px; flex: none; display: flex; flex-direction: column; align-items: center; background: #dfe3e8; border-left: 1px solid #b0b5bd; }
.vscroll button { height: 17px; width: 15px; display: flex; align-items: center; justify-content: center; }
.split { width: 14px; height: 8px; border: 1px solid #8b919a; background: linear-gradient(#fff 2px, #777 2px, #777 3px, #fff 3px); }
.vthumb { width: 15px; height: 113px; border: 1px solid #90969f; border-radius: 2px; background: linear-gradient(90deg, #fff, #dde0e6); display: flex; flex-direction: column; gap: 1px; align-items: center; justify-content: center; }
.vthumb i { width: 8px; height: 1px; background: #7d838c; }
.vspace, .hspace { flex: 1; }
.sheetbar { height: 17px; flex: none; display: flex; background: #dde1e8; border-bottom: 1px solid #9aa0a9; }
.nav { display: flex; width: 62px; gap: 1px; border-top: 1px solid #9aa0a9; border-right: 1px solid #9aa0a9; }
.nav button { flex: 1; display: flex; align-items: center; justify-content: center; }
.stab { font-size: 12px; width: 45px; line-height: 16px; color: #555b66; white-space: nowrap; display: flex; justify-content: center; border-top: 1px solid #9aa0a9; }
.stab.first { font-weight: bold; background: #fff; width: 53px; color: #444; border-top-color: #fff; justify-content: flex-start; padding-left: 8px; }
.stab.new { width: 20px; align-items: center; }
.hscroll { margin: 0 15px 0 auto; width: 526px; display: flex; align-items: center; }
.hscroll button { width: 16px; height: 15px; display: flex; align-items: center; justify-content: center; }
.hsplit { width: 8px; height: 15px; border: 1px solid #8b919a; background: linear-gradient(90deg, #fff 2px, #777 2px, #777 3px, #fff 3px); }
.hthumb { width: 81px; height: 16px; border: 1px solid #90969f; border-radius: 2px; background: linear-gradient(#fff, #dde0e6); display: flex; gap: 1px; align-items: center; justify-content: center; }
.hthumb i { width: 1px; height: 7px; background: #7d838c; }
.status { height: 21px; flex: none; display: flex; align-items: center; background: linear-gradient(#e6e8eb, #ccd0d5 50%, #b6bac0); }
.ready { width: 48px; padding-left: 8px; border-right: 1px solid #979ca4; }
.spacer { flex: 1; }
.view { width: 18px; height: 18px; display: flex; align-items: center; justify-content: center; }
.view.on { border: 1px solid #c2973c; border-radius: 2px; background: #fbd96c; }
.pc { margin: 0 8px 0 10px; }
.zoom { width: 91px; height: 15px; appearance: none; margin: 0 3px; background: linear-gradient(#8d939b, #8d939b) 0 7px / 100% 1px no-repeat; }
.zoom::-webkit-slider-thumb { appearance: none; width: 9px; height: 13px; background: linear-gradient(#fff, #b8bcc2); border: 1px solid #666; border-radius: 1px 1px 5px 5px; }
.grip { margin: 6px 1px 0 9px; }
</style>
